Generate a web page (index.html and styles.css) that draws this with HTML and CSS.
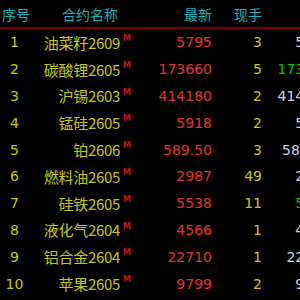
FILE: index.html
```html
<!DOCTYPE html>
<html lang="zh-CN">
<head>
    <meta charset="UTF-8">
    <meta name="viewport" content="width=device-width, initial-scale=1.0">
    <link rel="stylesheet" href="styles.css">
</head>
<body>

    <div class="quote-table">
        <div class="row head">
            <div class="cell no">序号</div>
            <div class="cell name-head">合约名称</div>
            <div class="cell num">最新</div>
            <div class="cell num">现手</div>
            <div class="cell num"></div>
        </div>

        <div class="row">
            <div class="cell no">1</div>
            <div class="cell name">油菜籽2609</div>
            <div class="cell mark">M</div>
            <div class="cell num last">5795</div>
            <div class="cell num vol">3</div>
            <div class="cell num bid">5794</div>
        </div>
        <div class="row">
            <div class="cell no">2</div>
            <div class="cell name">碳酸锂2605</div>
            <div class="cell mark">M</div>
            <div class="cell num last">173660</div>
            <div class="cell num vol">5</div>
            <div class="cell num bid up">173660</div>
        </div>
        <div class="row">
            <div class="cell no">3</div>
            <div class="cell name">沪锡2603</div>
            <div class="cell mark">M</div>
            <div class="cell num last">414180</div>
            <div class="cell num vol">2</div>
            <div class="cell num bid">414180</div>
        </div>
        <div class="row">
            <div class="cell no">4</div>
            <div class="cell name">锰硅2605</div>
            <div class="cell mark">M</div>
            <div class="cell num last">5918</div>
            <div class="cell num vol">2</div>
            <div class="cell num bid">5916</div>
        </div>
        <div class="row">
            <div class="cell no">5</div>
            <div class="cell name">铂2606</div>
            <div class="cell mark">M</div>
            <div class="cell num last">589.50</div>
            <div class="cell num vol">3</div>
            <div class="cell num bid">589.00</div>
        </div>
        <div class="row">
            <div class="cell no">6</div>
            <div class="cell name">燃料油2605</div>
            <div class="cell mark">M</div>
            <div class="cell num last">2987</div>
            <div class="cell num vol">49</div>
            <div class="cell num bid">2986</div>
        </div>
        <div class="row">
            <div class="cell no">7</div>
            <div class="cell name">硅铁2605</div>
            <div class="cell mark">M</div>
            <div class="cell num last">5538</div>
            <div class="cell num vol">11</div>
            <div class="cell num bid up">5538</div>
        </div>
        <div class="row">
            <div class="cell no">8</div>
            <div class="cell name">液化气2604</div>
            <div class="cell mark">M</div>
            <div class="cell num last">4566</div>
            <div class="cell num vol">1</div>
            <div class="cell num bid">4565</div>
        </div>
        <div class="row">
            <div class="cell no">9</div>
            <div class="cell name">铝合金2604</div>
            <div class="cell mark">M</div>
            <div class="cell num last">22710</div>
            <div class="cell num vol">1</div>
            <div class="cell num bid">22705</div>
        </div>
        <div class="row">
            <div class="cell no">10</div>
            <div class="cell name">苹果2605</div>
            <div class="cell mark">M</div>
            <div class="cell num last">9799</div>
            <div class="cell num vol">2</div>
            <div class="cell num bid">9798</div>
        </div>
    </div>

</body>
</html>
```

FILE: styles.css
```css
body {
    margin: 0;
    background-color: #000;
    overflow: hidden;
    font-family: 'DejaVu Sans', sans-serif;
    font-size: 14px;
}

.quote-table {
    width: 331px;
}

.row {
    display: grid;
    grid-template-columns: 29px 91px 14px 78px 50px 69px;
    height: 26.8px;
    align-items: center;
    white-space: nowrap;
}

.row.head {
    height: 29px;
    border-bottom: 2px solid #7a0000; /* dark red rule under the header */
    color: #14b4b4;
    font-family: 'Noto Sans CJK SC', sans-serif;
    font-size: 14px;
    box-sizing: border-box;
}

.no {
    text-align: center;
    color: #c8c800;
}

.head .no {
    color: #14b4b4;
    text-align: left;
    padding-left: 2px;
}

.name-head {
    grid-column: span 2;
    text-align: right;
    padding-right: 16px;
}

.name {
    text-align: right;
    color: #c8c800;
    font-family: 'Noto Sans CJK SC', sans-serif;
    font-size: 15px;
    letter-spacing: -0.3px;
}

.mark {
    align-self: start;
    padding-top: 5px;
    padding-left: 3px;
    color: #c81414;
    font-size: 8px;
    font-weight: bold;
}

.num {
    text-align: right;
}

.head .num {
    color: #14b4b4;
}

.last {
    color: #e83232;
}

.vol {
    color: #c8c800;
}

.bid {
    color: #c8d4e8;
}

.bid.up {
    color: #00c800;
}
```
